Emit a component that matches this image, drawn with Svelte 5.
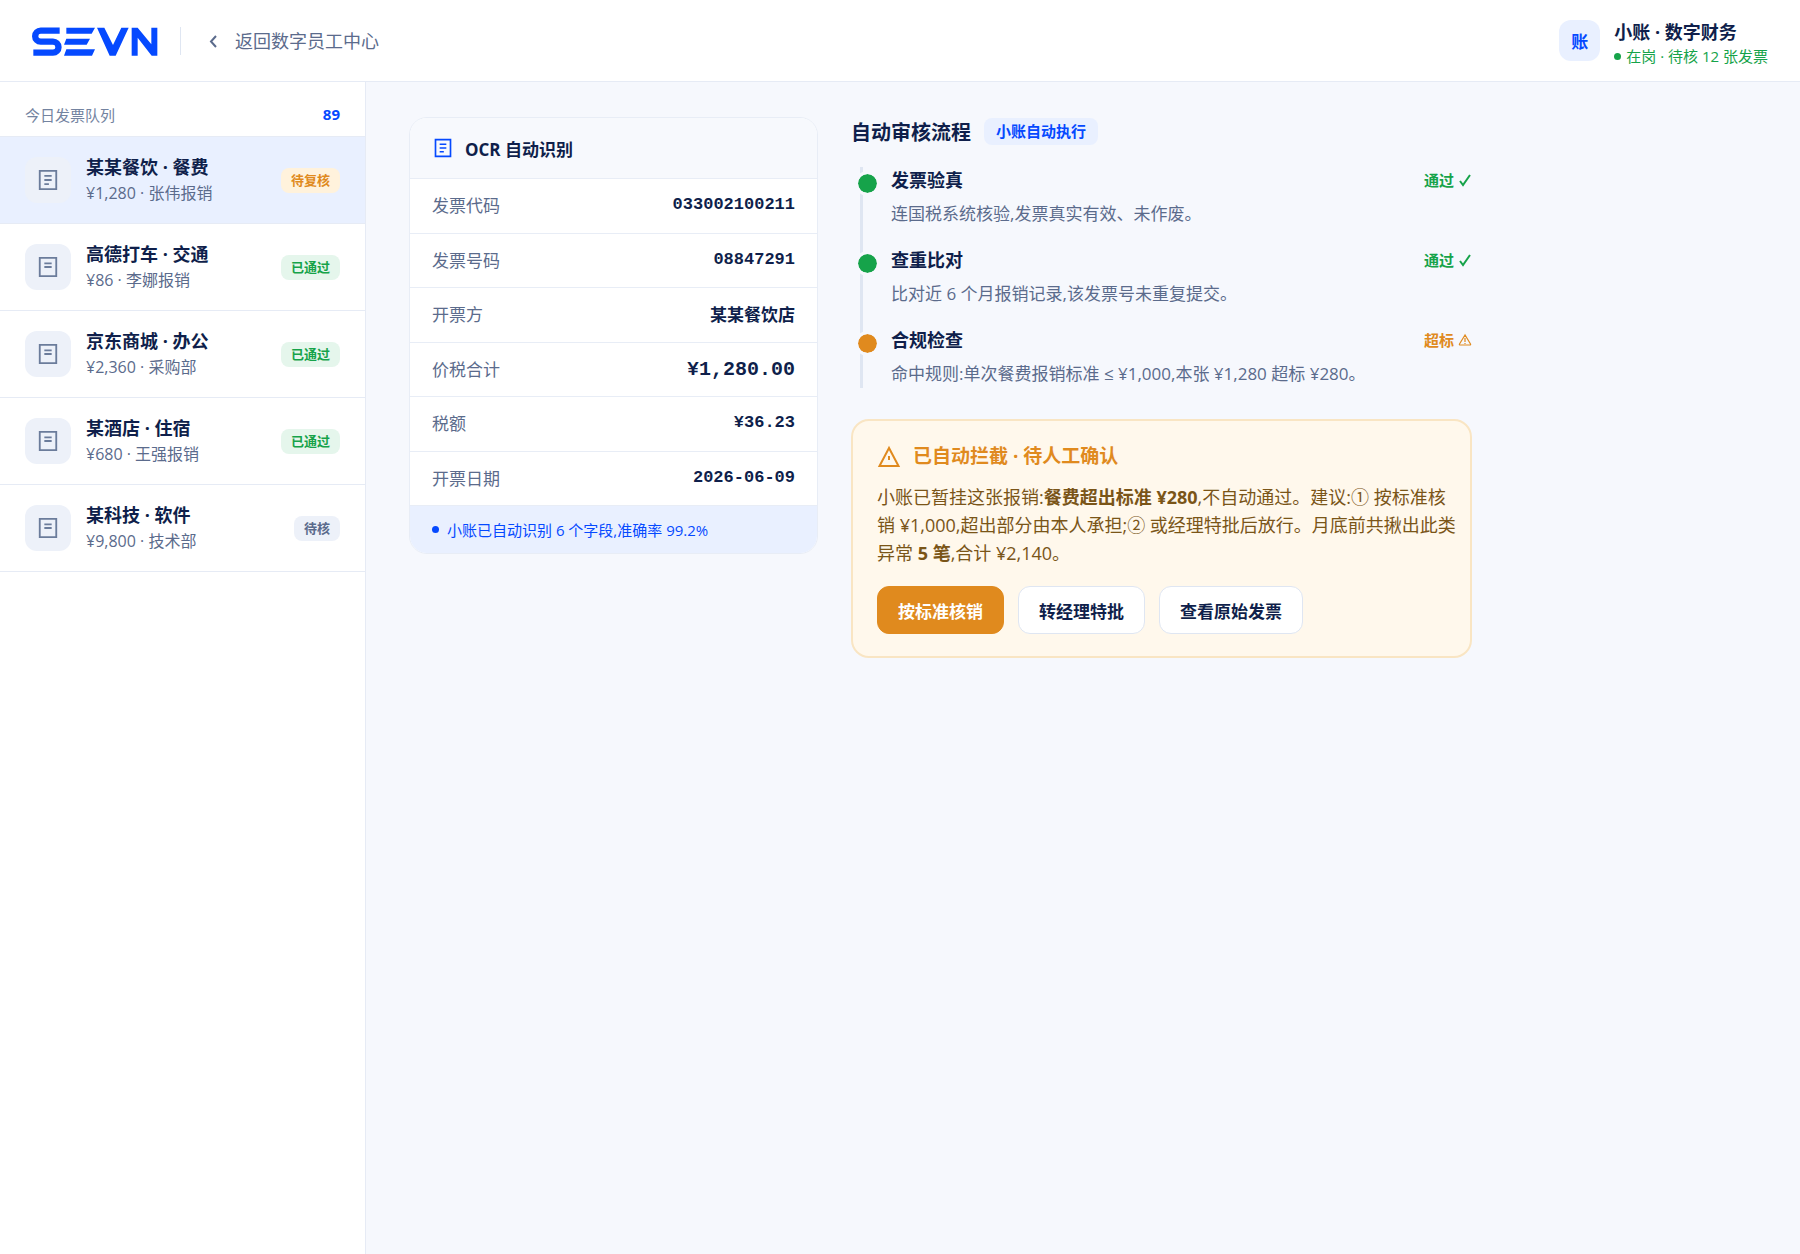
<script>
    const queue = [
        { name: '某某餐饮 · 餐费', info: '¥1,280 · 张伟报销', status: '待复核', tone: 'warn', lines: 3 },
        { name: '高德打车 · 交通', info: '¥86 · 李娜报销', status: '已通过', tone: 'ok', lines: 2 },
        { name: '京东商城 · 办公', info: '¥2,360 · 采购部', status: '已通过', tone: 'ok', lines: 2 },
        { name: '某酒店 · 住宿', info: '¥680 · 王强报销', status: '已通过', tone: 'ok', lines: 2 },
        { name: '某科技 · 软件', info: '¥9,800 · 技术部', status: '待核', tone: 'idle', lines: 2 }
    ];

    const fields = [
        { label: '发票代码', value: '033002100211', kind: 'mono' },
        { label: '发票号码', value: '08847291', kind: 'mono' },
        { label: '开票方', value: '某某餐饮店', kind: '' },
        { label: '价税合计', value: '¥1,280.00', kind: 'mono total' },
        { label: '税额', value: '¥36.23', kind: 'mono' },
        { label: '开票日期', value: '2026-06-09', kind: 'mono' }
    ];

    const steps = [
        { title: '发票验真', desc: '连国税系统核验,发票真实有效、未作废。', result: '通过', tone: 'ok' },
        { title: '查重比对', desc: '比对近 6 个月报销记录,该发票号未重复提交。', result: '通过', tone: 'ok' },
        { title: '合规检查', desc: '命中规则:单次餐费报销标准 ≤ ¥1,000,本张 ¥1,280 超标 ¥280。', result: '超标', tone: 'warn' }
    ];

    let selected = $state(0);
</script>

{#snippet receipt(size, lines)}
    <svg width={size} height={size} viewBox="0 0 24 24" fill="none" stroke="currentColor" stroke-width="2" aria-hidden="true">
        <path d="M3 2h18v20H3z" />
        {#if lines === 3}
            <path d="M8 7.5h8M8 12h8M8 16.5h5" />
        {:else}
            <path d="M8 8h8M8 12h8" />
        {/if}
    </svg>
{/snippet}

<div class="page">
    <header class="topbar">
        <svg class="logo" viewBox="0 -4 378 90" role="img" aria-label="SEVN">
            <path d="M83 10H26a16.5 16.5 0 0 0 0 33H63a16.5 16.5 0 0 1 0 33H4" fill="none" stroke="currentColor" stroke-width="19" />
            <path d="M103 1h86l-10 18h-76zM103 34h71l-10 18h-68zM103 66h86l-9 19H96z" />
            <path d="M195 1h22l26 52 25-52h22l-39 84h-18z" />
            <path d="M299 1h18l41 50V1h18v84h-17l-42-54v54h-18z" />
        </svg>
        <span class="divider"></span>
        <a class="back" href="#center">
            <svg width="20" height="20" viewBox="0 0 20 20" fill="none" stroke="currentColor" stroke-width="2" aria-hidden="true">
                <path d="M13 5l-5 5.5 5 5.5" />
            </svg>
            返回数字员工中心
        </a>
        <div class="agent">
            <span class="avatar">账</span>
            <div class="agent-text">
                <div class="agent-name">小账 · 数字财务</div>
                <div class="agent-state"><i class="dot"></i>在岗 · 待核 12 张发票</div>
            </div>
        </div>
    </header>

    <div class="body">
        <aside class="queue">
            <div class="queue-head">
                <span>今日发票队列</span>
                <b>89</b>
            </div>
            {#each queue as item, i}
                <button class="item" class:active={selected === i} onclick={() => (selected = i)}>
                    <span class="thumb">{@render receipt(22, item.lines)}</span>
                    <span class="item-text">
                        <span class="item-name">{item.name}</span>
                        <span class="item-info">{item.info}</span>
                    </span>
                    <span class="badge {item.tone}">{item.status}</span>
                </button>
            {/each}
        </aside>

        <main class="content">
            <section class="ocr">
                <h2 class="ocr-head">{@render receipt(20, 3)}OCR 自动识别</h2>
                <dl>
                    {#each fields as field}
                        <div class="field">
                            <dt>{field.label}</dt>
                            <dd class={field.kind}>{field.value}</dd>
                        </div>
                    {/each}
                </dl>
                <div class="ocr-foot"><i class="dot"></i>小账已自动识别 6 个字段,准确率 99.2%</div>
            </section>

            <section class="review">
                <div class="review-head">
                    <h2>自动审核流程</h2>
                    <span class="pill">小账自动执行</span>
                </div>
                <ol class="steps">
                    {#each steps as step}
                        <li class="step {step.tone}">
                            <div class="step-top">
                                <h3>{step.title}</h3>
                                <span class="result">
                                    {step.result}
                                    <svg width="14" height="14" viewBox="0 0 14 14" fill="none" stroke="currentColor" aria-hidden="true">
                                        {#if step.tone === 'ok'}
                                            <path d="M2 8l3 4 7-10" stroke-width="2" />
                                        {:else}
                                            <path d="M7 2L1.5 11q-.5 1 .7 1h9.6q1.2 0 .7-1zM7 5v4M7 10v1" stroke-width="1.2" />
                                        {/if}
                                    </svg>
                                </span>
                            </div>
                            <p>{step.desc}</p>
                        </li>
                    {/each}
                </ol>

                <div class="alert">
                    <h3>
                        <svg width="24" height="24" viewBox="0 0 24 24" fill="none" stroke="currentColor" stroke-width="2" aria-hidden="true">
                            <path d="M12 3L2.5 21h19zM12 11v4" />
                        </svg>
                        已自动拦截 · 待人工确认
                    </h3>
                    <p>
                        小账已暂挂这张报销:<b>餐费超出标准 ¥280</b>,不自动通过。建议:① 按标准核销 ¥1,000,超出部分由本人承担;② 或经理特批后放行。月底前共揪出此类异常 <b>5 笔</b>,合计 ¥2,140。
                    </p>
                    <div class="actions">
                        <button class="primary">按标准核销</button>
                        <button>转经理特批</button>
                        <button>查看原始发票</button>
                    </div>
                </div>
            </section>
        </main>
    </div>
</div>

<style>
    :global(body) {
        margin: 0;
        background: #f6f8fd;
    }

    .page {
        min-height: 100vh;
        display: flex;
        flex-direction: column;
        font-family: "Open Sans", "Noto Sans CJK SC", sans-serif;
        color: #0f1f4b;
    }

    .page * {
        box-sizing: border-box;
    }

    h2, h3, p, dl, dd, ol {
        margin: 0;
        padding: 0;
    }

    button {
        font-family: inherit;
        color: inherit;
        cursor: pointer;
    }

    svg {
        flex: none;
    }

    .topbar {
        display: flex;
        align-items: center;
        height: 82px;
        padding: 0 32px;
        background: #fff;
        border-bottom: 1px solid #e6ebf5;
    }

    .logo {
        width: 126px;
        height: 30px;
        color: #0549ff;
        fill: currentColor;
    }

    .divider {
        width: 1px;
        height: 28px;
        margin: 0 22px;
        background: #dfe6f2;
    }

    .back {
        display: flex;
        align-items: center;
        gap: 12px;
        font-size: 18px;
        line-height: 24px;
        color: #5b6b8c;
        text-decoration: none;
    }

    .agent {
        display: flex;
        align-items: center;
        gap: 14px;
        margin-left: auto;
    }

    .avatar {
        display: grid;
        place-items: center;
        width: 41px;
        height: 41px;
        border-radius: 12px;
        background: #e9f0ff;
        color: #0549ff;
        font-size: 17px;
        font-weight: 700;
    }

    .agent-text {
        padding-top: 6px;
    }

    .agent-name {
        font-size: 18px;
        font-weight: 700;
        line-height: 25px;
    }

    .agent-state {
        display: flex;
        align-items: center;
        gap: 5px;
        font-size: 15px;
        line-height: 23px;
        color: #16a34a;
    }

    .dot {
        width: 7px;
        height: 7px;
        border-radius: 50%;
        background: currentColor;
    }

    .body {
        flex: 1;
        display: flex;
    }

    .queue {
        width: 366px;
        flex: none;
        background: #fff;
        border-right: 1px solid #e6ebf5;
    }

    .queue-head {
        display: flex;
        justify-content: space-between;
        align-items: center;
        height: 55px;
        padding: 10px 25px 0;
        border-bottom: 1px solid #e6ebf5;
        font-size: 15px;
        color: #7383a0;
    }

    .queue-head b {
        color: #0549ff;
    }

    .item {
        display: flex;
        align-items: center;
        gap: 15px;
        width: 100%;
        height: 87px;
        padding: 0 25px;
        border: 0;
        border-bottom: 1px solid #e6ebf5;
        background: #fff;
        text-align: left;
    }

    .item.active {
        background: #e9f0ff;
    }

    .thumb {
        display: grid;
        place-items: center;
        width: 46px;
        height: 46px;
        border-radius: 12px;
        background: #edf1f9;
        color: #6b7c9b;
    }

    .item-text {
        display: flex;
        flex-direction: column;
        flex: 1;
    }

    .item-name {
        font-size: 18px;
        font-weight: 700;
        line-height: 26px;
    }

    .item-info {
        font-size: 16px;
        line-height: 26px;
        color: #5b6b8c;
    }

    .badge {
        padding: 0 10px;
        border-radius: 8px;
        font-size: 13px;
        font-weight: 700;
        line-height: 25px;
    }

    .badge.warn {
        background: #fff2dc;
        color: #e08a1e;
    }

    .badge.ok {
        background: #e5f6ec;
        color: #16a34a;
    }

    .badge.idle {
        background: #edf1f9;
        color: #5b6b8c;
    }

    .content {
        flex: 1;
        display: grid;
        grid-template-columns: 409px minmax(0, 621px);
        gap: 33px;
        align-items: start;
        padding: 35px 43px;
    }

    .ocr {
        overflow: hidden;
        border: 1px solid #e8edf6;
        border-radius: 18px;
        background: #fff;
    }

    .ocr-head {
        display: flex;
        align-items: center;
        gap: 12px;
        height: 61px;
        padding: 0 23px;
        background: #f7f9fd;
        border-bottom: 1px solid #e8edf6;
        font-size: 17px;
    }

    .ocr-head svg {
        color: #0549ff;
    }

    .field {
        display: flex;
        justify-content: space-between;
        height: 54px;
        padding: 14px 22px;
        border-bottom: 1px solid #e8edf6;
        font-size: 17px;
        line-height: 26px;
    }

    .field:nth-child(odd) {
        height: 55px;
    }

    .field dt {
        color: #5b6b8c;
    }

    .field dd {
        font-weight: 600;
    }

    .field .mono {
        font-family: "Liberation Mono", monospace;
        font-weight: 700;
        line-height: 23px;
    }

    .field .total {
        font-size: 20px;
        line-height: 26px;
    }

    .ocr-foot {
        display: flex;
        align-items: center;
        gap: 8px;
        height: 47px;
        padding: 0 22px;
        background: #e9f0ff;
        color: #0549ff;
        font-size: 15px;
    }

    .review-head {
        display: flex;
        align-items: center;
        gap: 13px;
        height: 29px;
        margin-bottom: 21px;
    }

    .review-head h2 {
        font-size: 20px;
    }

    .pill {
        padding: 0 12px;
        border-radius: 8px;
        background: #e9f0ff;
        color: #0549ff;
        font-size: 15px;
        font-weight: 600;
        line-height: 27px;
    }

    .steps {
        position: relative;
        margin-left: 9px;
        padding-left: 31px;
        list-style: none;
    }

    .steps::before {
        content: "";
        position: absolute;
        top: 0;
        bottom: 0;
        left: 0;
        width: 3px;
        background: #dfe6f2;
    }

    .step {
        position: relative;
        padding-bottom: 19px;
    }

    .step:last-child {
        padding-bottom: 0;
    }

    /* status marker on the rail */
    .step::before {
        content: "";
        position: absolute;
        top: 4px;
        left: -36px;
        width: 19px;
        height: 19px;
        border: 3px solid #f6f8fd;
        border-radius: 50%;
        background: currentColor;
        background-clip: padding-box;
        box-sizing: content-box;
    }

    .step.ok::before,
    .ok .result {
        color: #16a34a;
    }

    .step.warn::before,
    .warn .result {
        color: #e08a1e;
    }

    .step-top {
        display: flex;
        justify-content: space-between;
        line-height: 26px;
    }

    .step h3 {
        font-size: 18px;
    }

    .result {
        display: flex;
        align-items: center;
        gap: 4px;
        font-size: 15px;
        font-weight: 700;
    }

    .step p {
        padding-top: 7px;
        font-size: 17px;
        line-height: 28px;
        color: #5b6b8c;
    }

    .alert {
        margin-top: 31px;
        padding: 23px 12px 22px 24px;
        border: 2px solid #f9e5c3;
        border-radius: 18px;
        background: #fff8ec;
    }

    .alert h3 {
        display: flex;
        align-items: center;
        gap: 12px;
        font-size: 19px;
        line-height: 25px;
        color: #e08a1e;
    }

    .alert p {
        margin: 14px 0 19px;
        font-size: 18px;
        line-height: 28px;
        color: #7a5518;
    }

    .actions {
        display: flex;
        gap: 14px;
    }

    .actions button {
        height: 48px;
        padding: 0 20px;
        border: 1px solid #dfe6f2;
        border-radius: 12px;
        background: #fff;
        font-size: 17px;
        font-weight: 600;
    }

    .actions .primary {
        border-color: #e08a1e;
        background: #e08a1e;
        color: #fff;
    }
</style>
